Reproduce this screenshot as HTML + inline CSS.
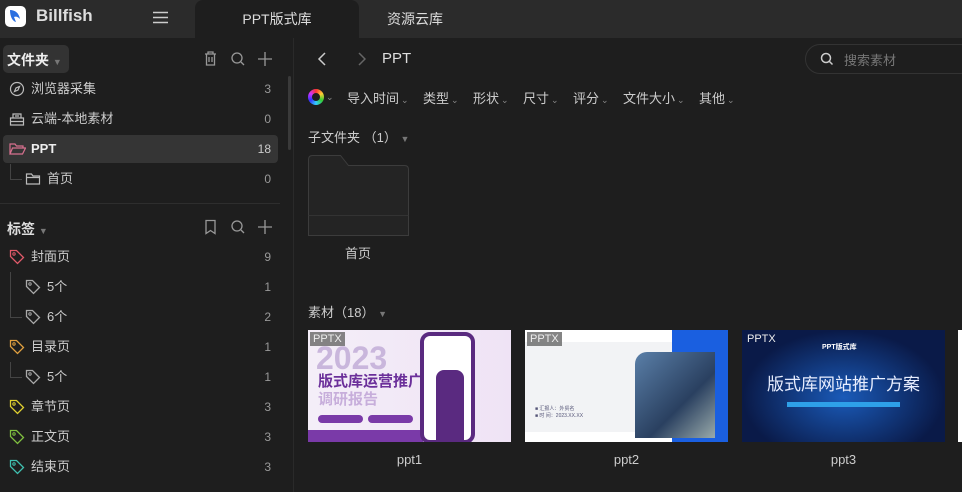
<!DOCTYPE html>
<html><head><meta charset="utf-8"><style>
*{margin:0;padding:0;box-sizing:border-box}
body{width:962px;height:492px;background:#1e1e1e;font-family:"Liberation Sans","Noto Sans CJK SC",sans-serif;color:#ccc;font-size:13px;position:relative;overflow:hidden}
.a{position:absolute}
.top{left:0;top:0;width:962px;height:38px;background:#2b2b2b}
.tab{top:0;height:38px;line-height:38px;font-size:14px;color:#ddd;text-align:center}
.row{left:0;width:280px;height:30px;line-height:30px;font-size:13px;color:#ccc}
.row .n{position:absolute;right:9px;top:0;color:#999;font-size:12px}
.row .t{position:absolute;top:0}
.row svg{position:absolute;top:7px}
.fl{top:88px;font-size:13px;color:#ccc}
.fl span{font-size:9px;color:#888;margin-left:2px}
.th{top:330px;width:203px;height:112px;overflow:hidden}
.badge{position:absolute;left:2px;top:2px;background:rgba(110,110,110,.85);color:#eee;font-size:11px;padding:0 3px;line-height:14px}
.lbl{top:452px;width:203px;text-align:center;font-size:13px;color:#ccc}
</style></head><body>
<div class="a top"></div>
<div class="a" style="left:5px;top:6px;width:21px;height:21px;background:#fff;border-radius:5px"><svg width="21" height="21" viewBox="0 0 21 21"><path d="M5 4c5 0 9 3 10 9-2-2-4-3-6-2l2 5C7 15 5 10 5 4z" fill="#2a6fe0"/></svg></div>
<div class="a" style="left:36px;top:6px;font-size:17px;font-weight:bold;color:#ddd">Billfish</div>
<svg class="a" style="left:153px;top:11px" width="15" height="13"><path d="M0 1.5h15M0 6.5h15M0 11.5h15" stroke="#ccc" stroke-width="1.4"/></svg>
<div class="a tab" style="left:195px;width:164px;background:#1e1e1e;border-radius:8px 8px 0 0">PPT版式库</div>
<div class="a tab" style="left:360px;width:110px;color:#ddd">资源云库</div>

<!-- sidebar -->
<div class="a" style="left:3px;top:45px;width:66px;height:28px;background:#333;border-radius:5px"></div>
<div class="a" style="left:7px;top:50px;font-size:14px;font-weight:bold;color:#eee">文件夹 <span style="font-size:9px;color:#777">▼</span></div>
<svg class="a" style="left:203px;top:51px" width="74" height="16" fill="none" stroke="#999" stroke-width="1.3"><path d="M2 3h11M5 3V1h5v2M3.5 3v11h8V3M6 6v5M9 6v5"/><circle cx="34" cy="7" r="5"/><path d="M38 11l3 3"/><path d="M62 1v14M55 8h14"/></svg>
<div class="a" style="left:288px;top:76px;width:3px;height:74px;background:#3a3a3a;border-radius:2px"></div>
<div class="a" style="left:293px;top:38px;width:1px;height:454px;background:#2a2a2a"></div>

<div class="a row" style="top:74px"><svg style="left:9px" width="16" height="16" fill="none" stroke="#bbb" stroke-width="1.2"><circle cx="8" cy="8" r="6.5"/><path d="M10.5 5.5L9 9 5.5 10.5 7 7z"/></svg><span class="t" style="left:31px">浏览器采集</span><span class="n">3</span></div>
<div class="a row" style="top:104px"><svg style="left:9px" width="16" height="16" fill="none" stroke="#bbb" stroke-width="1.2"><path d="M4 7V3h8v4M1.5 7h13v7h-13zM1.5 10.5h13M6 5h4"/></svg><span class="t" style="left:31px">云端-本地素材</span><span class="n">0</span></div>
<div class="a" style="left:3px;top:135px;width:275px;height:28px;background:#353535;border-radius:4px"></div>
<div class="a row" style="top:134px"><svg style="left:9px" width="17" height="16" fill="none" stroke="#d8708f" stroke-width="1.2"><path d="M1 13V3h5l1.5 2H14v2M1 13l2.5-6h13l-3 6z"/></svg><span class="t" style="left:31px;font-weight:bold;color:#eee">PPT</span><span class="n" style="color:#ccc">18</span></div>
<div class="a" style="left:10px;top:164px;width:12px;height:16px;border-left:1px solid #444;border-bottom:1px solid #444"></div>
<div class="a row" style="top:164px"><svg style="left:25px" width="16" height="16" fill="none" stroke="#bbb" stroke-width="1.2"><path d="M1.5 3h5l1.5 2h6.5v8h-13zM1.5 6.5h13"/></svg><span class="t" style="left:47px">首页</span><span class="n">0</span></div>
<div class="a" style="left:0;top:203px;width:280px;height:1px;background:#2e2e2e"></div>

<div class="a" style="left:7px;top:219px;font-size:14px;font-weight:bold;color:#ddd">标签 <span style="font-size:9px;color:#777">▼</span></div>
<svg class="a" style="left:203px;top:219px" width="74" height="16" fill="none" stroke="#999" stroke-width="1.3"><path d="M3 1.5h9v13l-4.5-3-4.5 3z"/><circle cx="34" cy="7" r="5"/><path d="M38 11l3 3"/><path d="M62 1v14M55 8h14"/></svg>

<svg width="0" height="0" style="position:absolute"><defs><g id="tg"><path d="M1.5 1.5h6l7 7-6 6-7-7z" fill="none" stroke-width="1.3"/><circle cx="5" cy="5" r="1.2" fill="none" stroke-width="1"/></g></defs></svg>
<div class="a row" style="top:242px"><svg style="left:9px" width="16" height="16" stroke="#e05a6a"><use href="#tg"/></svg><span class="t" style="left:31px">封面页</span><span class="n">9</span></div>
<div class="a" style="left:10px;top:272px;width:12px;height:46px;border-left:1px solid #444;border-bottom:1px solid #444"></div>
<div class="a row" style="top:272px"><svg style="left:25px" width="16" height="16" stroke="#aaa"><use href="#tg"/></svg><span class="t" style="left:47px">5个</span><span class="n">1</span></div>
<div class="a row" style="top:302px"><svg style="left:25px" width="16" height="16" stroke="#aaa"><use href="#tg"/></svg><span class="t" style="left:47px">6个</span><span class="n">2</span></div>
<div class="a row" style="top:332px"><svg style="left:9px" width="16" height="16" stroke="#e0a040"><use href="#tg"/></svg><span class="t" style="left:31px">目录页</span><span class="n">1</span></div>
<div class="a" style="left:10px;top:362px;width:12px;height:16px;border-left:1px solid #444;border-bottom:1px solid #444"></div>
<div class="a row" style="top:362px"><svg style="left:25px" width="16" height="16" stroke="#aaa"><use href="#tg"/></svg><span class="t" style="left:47px">5个</span><span class="n">1</span></div>
<div class="a row" style="top:392px"><svg style="left:9px" width="16" height="16" stroke="#e0d030"><use href="#tg"/></svg><span class="t" style="left:31px">章节页</span><span class="n">3</span></div>
<div class="a row" style="top:422px"><svg style="left:9px" width="16" height="16" stroke="#80c040"><use href="#tg"/></svg><span class="t" style="left:31px">正文页</span><span class="n">3</span></div>
<div class="a row" style="top:452px"><svg style="left:9px" width="16" height="16" stroke="#40c0b0"><use href="#tg"/></svg><span class="t" style="left:31px">结束页</span><span class="n">3</span></div>

<!-- content -->
<svg class="a" style="left:316px;top:52px" width="50" height="14" fill="none" stroke-width="1.5"><path d="M9 1L3 7l6 6" stroke="#ccc"/><path d="M43 1l6 6-6 6" stroke="#666"/></svg>
<div class="a" style="left:382px;top:50px;font-size:15px;color:#ddd">PPT</div>
<div class="a" style="left:805px;top:44px;width:170px;height:30px;border:1px solid #333;border-radius:15px"></div>
<svg class="a" style="left:820px;top:52px" width="14" height="14" fill="none" stroke="#ccc" stroke-width="1.5"><circle cx="6" cy="6" r="4.5"/><path d="M9.5 9.5l3 3"/></svg>
<div class="a" style="left:844px;top:50px;font-size:13px;color:#777">搜索素材</div>

<div class="a" style="left:308px;top:89px;width:16px;height:16px;border-radius:50%;background:conic-gradient(#f33,#fc3,#3c3,#3cf,#33f,#c3f,#f33)"><div style="margin:4px;width:8px;height:8px;border-radius:50%;background:#1e1e1e"></div></div>
<div class="a fl" style="left:326px"><span style="margin:0">⌄</span></div>
<div class="a fl" style="left:347px">导入时间<span>⌄</span></div>
<div class="a fl" style="left:423px">类型<span>⌄</span></div>
<div class="a fl" style="left:473px">形状<span>⌄</span></div>
<div class="a fl" style="left:523px">尺寸<span>⌄</span></div>
<div class="a fl" style="left:573px">评分<span>⌄</span></div>
<div class="a fl" style="left:623px">文件大小<span>⌄</span></div>
<div class="a fl" style="left:699px">其他<span>⌄</span></div>

<div class="a" style="left:308px;top:127px;font-size:13px;color:#ccc">子文件夹 （1） <span style="font-size:9px;color:#777">▼</span></div>
<svg class="a" style="left:308px;top:155px" width="101" height="81" fill="#242424" stroke="#3c3c3c"><path d="M0.5 80.5V4.5q0-4 4-4h28l8 10h56q4 0 4 4v66z"/><path d="M0.5 60.5h100" stroke="#333"/></svg>
<div class="a" style="left:308px;top:243px;width:100px;text-align:center;font-size:13px">首页</div>

<div class="a" style="left:308px;top:302px;font-size:13px;color:#ccc">素材（18） <span style="font-size:9px;color:#777">▼</span></div>

<div class="a th" style="left:308px;background:linear-gradient(90deg,#f4eef8,#efe3f5)">
 <div class="a" style="left:8px;top:10px;font-size:32px;font-weight:bold;color:#c9b6dc">2023</div>
 <div class="a" style="left:10px;top:40px;font-size:15px;font-weight:bold;color:#6b2f9a">版式库运营推广</div>
 <div class="a" style="left:10px;top:58px;font-size:15px;font-weight:bold;color:#c7aedb">调研报告</div>
 <div class="a" style="left:10px;top:85px;width:45px;height:8px;background:#7a3aa8;border-radius:4px"></div>
 <div class="a" style="left:60px;top:85px;width:45px;height:8px;background:#7a3aa8;border-radius:4px"></div>
 <div class="a" style="left:0;top:100px;width:115px;height:12px;background:#7a3aa8"></div>
 <div class="a" style="left:112px;top:2px;width:55px;height:112px;border:4px solid #5a2a80;border-radius:10px;background:#fff"></div>
 <div class="a" style="left:128px;top:40px;width:28px;height:72px;background:#5a2a80;border-radius:8px 8px 0 0"></div>
 <div class="badge">PPTX</div>
</div>
<div class="a th" style="left:525px;background:#fff">
 <div class="a" style="left:0;top:12px;width:160px;height:90px;background:#f2f3f5"></div>
 <div class="a" style="left:147px;top:0;width:56px;height:112px;background:#1a5fe0"></div>
 <div class="a" style="left:110px;top:22px;width:80px;height:86px;background:linear-gradient(135deg,#5a7fa8,#2a4060 60%,#9aa);border-radius:12px 0 0 0"></div>
 <div class="a" style="left:10px;top:75px;font-size:5px;color:#557">■ 汇报人：外贸名<br>■ 时 间：2023.XX.XX</div>
 <div class="badge">PPTX</div>
</div>
<div class="a th" style="left:742px;background:radial-gradient(ellipse at 50% 60%,#1a5ab8,#0a1a48 70%)">
 <div class="a" style="left:0;top:40px;width:203px;text-align:center;font-size:17px;color:#e8eeff">版式库网站推广方案</div>
 <div class="a" style="left:45px;top:72px;width:113px;height:5px;background:#2ea0e8"></div>
 <div class="a" style="left:80px;top:12px;font-size:7px;font-weight:bold;color:#fff">PPT版式库</div>
 <div class="badge" style="background:none">PPTX</div>
</div>
<div class="a th" style="left:958px;width:4px;background:#fff"></div>
<div class="a lbl" style="left:308px">ppt1</div>
<div class="a lbl" style="left:525px">ppt2</div>
<div class="a lbl" style="left:742px">ppt3</div>
</body></html>
